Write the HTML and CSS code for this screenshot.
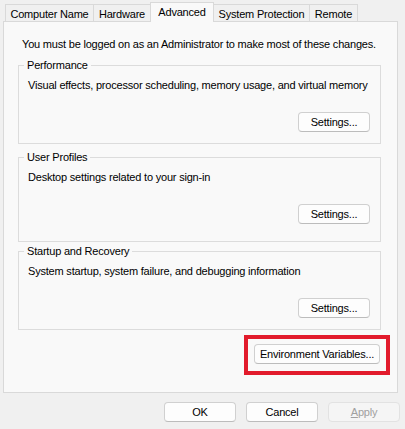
FILE: index.html
```html
<!DOCTYPE html>
<html>
<head>
<meta charset="utf-8">
<link rel="stylesheet" href="styles.css">
</head>
<body>
<div class="dialog">
  <div class="tabs">
    <div class="tab tab-cn">Computer Name</div>
    <div class="tab tab-hw">Hardware</div>
    <div class="tab tab-adv active">Advanced</div>
    <div class="tab tab-sp">System Protection</div>
    <div class="tab tab-rm">Remote</div>
  </div>
  <div class="panel">
    <p class="notice">You must be logged on as an Administrator to make most of these changes.</p>
    <fieldset class="group group-perf">
      <legend>Performance</legend>
      <p class="desc">Visual effects, processor scheduling, memory usage, and virtual memory</p>
      <div class="actions"><button class="btn btn-settings">Settings...</button></div>
    </fieldset>
    <fieldset class="group group-profiles">
      <legend>User Profiles</legend>
      <p class="desc">Desktop settings related to your sign-in</p>
      <div class="actions"><button class="btn btn-settings">Settings...</button></div>
    </fieldset>
    <fieldset class="group group-startup">
      <legend>Startup and Recovery</legend>
      <p class="desc">System startup, system failure, and debugging information</p>
      <div class="actions"><button class="btn btn-settings">Settings...</button></div>
    </fieldset>
    <div class="env-row">
      <div class="highlight"><button class="btn btn-env">Environment Variables...</button></div>
    </div>
  </div>
  <div class="footer">
    <button class="btn btn-dlg">OK</button>
    <button class="btn btn-dlg">Cancel</button>
    <button class="btn btn-dlg" disabled><u>A</u>pply</button>
  </div>
</div>
</body>
</html>
```

FILE: styles.css
```css
* { box-sizing: border-box; }

html, body {
  margin: 0;
  padding: 0;
  background: #f0f0f0;
}

body {
  font-family: "Liberation Sans", Arial, sans-serif;
  font-size: 11px;
  letter-spacing: -0.2px;
  color: #000;
}

.dialog {
  width: 405px;
  height: 429px;
}

.tabs {
  display: flex;
  align-items: flex-end;
  height: 21px;
  padding-left: 5px;
}

.tab {
  height: 17px;
  border: 1px solid #d9d9d9;
  border-bottom: none;
  background: #f0f0f0;
  margin-left: -1px;
  text-align: center;
  line-height: 16px;
  padding-top: 1px;
  white-space: nowrap;
}
.tab:first-child { margin-left: 0; }

.tab-cn { width: 89px; }
.tab-hw { width: 58px; }
.tab-adv { width: 64px; }
.tab-sp { width: 97px; }
.tab-rm { width: 49px; }

.tab.active {
  height: 20px;
  margin-bottom: -1px;
  background: #f9f9f9;
  position: relative;
  z-index: 1;
  padding-top: 1px;
}

.panel {
  margin-left: 3px;
  width: 395px;
  height: 372px;
  border: 1px solid #d9d9d9;
  background: #f9f9f9;
  padding: 0 16px 0 14px;
}

.notice {
  margin: 15px 0 0 4px;
  line-height: 15px;
}

.group {
  margin: 6px 0 0 0;
  padding: 5px 10px 11px 9px;
  border: 1px solid #dcdcdc;
  min-width: 0;
}

.group legend {
  padding: 0 3px;
  margin-left: -4px;
  line-height: 15px;
}

.group-profiles { padding-bottom: 17px; }
.group-startup { margin-top: 2px; }

.desc {
  margin: 0;
  line-height: 15px;
}

.actions {
  display: flex;
  justify-content: flex-end;
  margin-top: 19px;
}

.btn {
  font-family: "Liberation Sans", Arial, sans-serif;
  font-size: 11px;
  letter-spacing: -0.2px;
  height: 20px;
  padding: 0;
  border: 1px solid #d0d0d0;
  border-bottom-color: #bcbcbc;
  border-radius: 4px;
  background: #fdfdfd;
  color: #000;
  line-height: 18px;
  text-align: center;
}

.btn-settings { width: 72px; }

.env-row {
  display: flex;
  justify-content: flex-end;
  margin-top: 5px;
  margin-right: -9px;
}

.highlight {
  border: 4px solid #e21b2c;
  padding: 5px 6px 6px 6px;
  height: 40px;
}

.btn-env { width: 126px; }

.footer {
  display: flex;
  justify-content: flex-end;
  gap: 10px;
  margin-top: 9px;
  padding-right: 5px;
}

.btn-dlg { width: 72px; }

.btn-dlg:disabled {
  background: #f5f5f5;
  border-color: #e2e2e2;
  color: #a0a0a0;
}
```
